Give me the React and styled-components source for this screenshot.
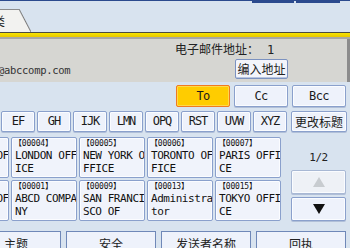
import React from 'react'
import styled, { createGlobalStyle } from 'styled-components'

const GlobalStyle = createGlobalStyle`
	html, body {
		margin: 0;
		padding: 0;
		background: #d8e3ef;
		overflow: hidden;
	}
`

const mono = `"DejaVu Sans Mono", "Liberation Mono", "Noto Sans CJK SC", monospace`
const cjk = `"Noto Sans CJK SC", "DejaVu Sans", sans-serif`

const letters = ['EF', 'GH', 'IJK', 'LMN', 'OPQ', 'RST', 'UVW', 'XYZ']

const entries = [
	{ id: '00003', name: 'CHICAGO OFFICE' },
	{ id: '00004', name: 'LONDON OFFICE' },
	{ id: '00005', name: 'NEW YORK OFFICE' },
	{ id: '00006', name: 'TORONTO OFFICE' },
	{ id: '00007', name: 'PARIS OFFICE' },
	{ id: '00002', name: 'SEATTLE OFFICE' },
	{ id: '00001', name: 'ABCD COMPANY' },
	{ id: '00009', name: 'SAN FRANCISCO OF' },
	{ id: '00013', name: 'Administrator' },
	{ id: '00015', name: 'TOKYO OFFICE' },
]

const bottomTabs = ['主题', '安全', '发送者名称', '回执']

export default function App() {
	return (
		<Screen>
			<GlobalStyle />
			<TopBar>
				<FolderTab>类</FolderTab>
				<TopEdges>
					<TopEdge $w={42} />
					<TopEdge $w={44} />
				</TopEdges>
			</TopBar>
			<YellowRule />
			<InfoPanel>
				<CountLine>
					电子邮件地址：<Count>1</Count>
				</CountLine>
				<EmailLine>
					<Email>@abccomp.com</Email>
					<KeyButton>编入地址</KeyButton>
				</EmailLine>
			</InfoPanel>
			<RecipientRow>
				<FieldButton $active>To</FieldButton>
				<FieldButton>Cc</FieldButton>
				<FieldButton>Bcc</FieldButton>
			</RecipientRow>
			<IndexRow>
				{letters.map((l) => (
					<IndexButton key={l}>{l}</IndexButton>
				))}
				<TitleButton>更改标题</TitleButton>
			</IndexRow>
			<Body>
				<CardGrid>
					{entries.map((e) => (
						<Card key={e.id}>
							<CardId>【{e.id}】</CardId>
							<CardName>{e.name}</CardName>
						</Card>
					))}
				</CardGrid>
				<Pager>
					<PageNum>1/2</PageNum>
					<PageButton $disabled>
						<Arrow $up $disabled />
					</PageButton>
					<PageButton>
						<Arrow />
					</PageButton>
				</Pager>
			</Body>
			<BottomTabs>
				{bottomTabs.map((t) => (
					<BottomTab key={t}>{t}</BottomTab>
				))}
			</BottomTabs>
		</Screen>
	)
}

const Screen = styled.div`
	width: 350px;
	height: 248px;
	overflow: hidden;
	background: #d8e3ef;
	display: flex;
	flex-direction: column;
	position: relative;
	& > * {
		flex-shrink: 0;
	}
`

const TopBar = styled.div`
	height: 31px;
	border-top: 1px solid #2b4a8e;
	display: flex;
	justify-content: space-between;
	align-items: flex-end;
	position: relative;
`

const FolderTab = styled.div`
	position: relative;
	width: 19px;
	height: 22px;
	font: 12px ${cjk};
	line-height: 22px;
	text-indent: -7px;
	color: #222;
	background: #f2f2f0;
	border-top: 1px solid #8c8c8c;
	&::after {
		content: '';
		position: absolute;
		top: -1px;
		right: -12px;
		width: 12px;
		height: 23px;
		background: linear-gradient(
			to top right,
			#f2f2f0 0,
			#f2f2f0 calc(50% - 1px),
			#7c7c7c 50%,
			transparent calc(50% + 1px)
		);
	}
`

const TopEdges = styled.div`
	position: absolute;
	top: 0;
	right: 10px;
	display: flex;
	gap: 2px;
`

const TopEdge = styled.div`
	width: ${(p) => p.$w}px;
	height: 2px;
	background: #2b4a8e;
`

const YellowRule = styled.div`
	height: 4px;
	border-top: 1px solid #4a4a40;
	border-bottom: 2px solid #a8a8a4;
	background: linear-gradient(#f8e400, #e8c800);
`

const InfoPanel = styled.div`
	height: 43px;
	background: #d6d6d2;
	border-right: 3px solid #8c8c8c;
	box-sizing: border-box;
	display: flex;
	flex-direction: column;
`

const CountLine = styled.div`
	height: 20px;
	padding-left: 175px;
	padding-top: 3px;
	box-sizing: border-box;
	font: 12px ${cjk};
	color: #222;
	line-height: 14px;
`

const Count = styled.span`
	margin-left: 8px;
	font-family: ${mono};
	font-size: 12px;
`

const EmailLine = styled.div`
	display: flex;
	align-items: flex-start;
	justify-content: space-between;
	padding-right: 59px;
`

const Email = styled.div`
	font: 10.5px ${mono};
	letter-spacing: -0.3px;
	color: #333;
	margin-left: -2px;
	margin-top: 5px;
`

const KeyButton = styled.div`
	width: 53px;
	height: 20px;
	box-sizing: border-box;
	border: 1px solid #7c92c0;
	border-radius: 2px;
	background: #f3f5fb;
	box-shadow: inset 0 -1px 0 #b8c6e0;
	font: 12px ${cjk};
	line-height: 18px;
	text-align: center;
	color: #222;
`

const RecipientRow = styled.div`
	display: flex;
	gap: 4px;
	padding-left: 176px;
	margin-top: 3px;
`

const buttonFace = `
	box-sizing: border-box;
	border: 1px solid #8aa0cc;
	border-radius: 2px;
	background: #eef2fb;
	box-shadow: inset 0 0 0 1px #fafcff, 0 1px 0 #b0bfd8;
	color: #1a1a1a;
	text-align: center;
`

const FieldButton = styled.div`
	${buttonFace}
	width: 54px;
	height: 22px;
	font: 12px ${mono};
	letter-spacing: -0.6px;
	line-height: 20px;
	${(p) =>
		p.$active &&
		`
		background: #ffcc00;
		border-color: #f07a20;
		box-shadow: inset 0 0 0 1px #ffd84a;
	`}
`

const IndexRow = styled.div`
	display: flex;
	gap: 2px;
	padding-left: 1px;
	margin-top: 4px;
`

const IndexButton = styled.div`
	${buttonFace}
	width: 34px;
	height: 21px;
	font: 12px ${mono};
	letter-spacing: -1px;
	line-height: 19px;
`

const TitleButton = styled.div`
	${buttonFace}
	width: 56px;
	height: 21px;
	margin-left: 2px;
	font: 12px ${cjk};
	line-height: 19px;
`

const Body = styled.div`
	display: flex;
	height: 84px;
	margin-top: 5px;
`

const CardGrid = styled.div`
	display: grid;
	grid-template-columns: repeat(5, 66px);
	grid-auto-rows: 41px;
	gap: 2px;
	margin-left: -57px;
`

const Card = styled.div`
	box-sizing: border-box;
	border: 1px solid #8aa0cc;
	border-radius: 2px;
	background: #f0f3fb;
	box-shadow: inset 0 0 0 1px #fbfcff;
	padding: 1px 0 0 3px;
	overflow: hidden;
	color: #111;
`

const CardId = styled.div`
	font: 8px ${mono};
	line-height: 10px;
	letter-spacing: -0.2px;
	margin-left: -1px;
`

const CardName = styled.div`
	font: 11px ${mono};
	letter-spacing: -0.45px;
	line-height: 13px;
	word-break: break-all;
	width: 64px;
`

const Pager = styled.div`
	margin-left: 10px;
	width: 55px;
	display: flex;
	flex-direction: column;
	gap: 3px;
`

const PageNum = styled.div`
	height: 30px;
	font: 11px ${mono};
	letter-spacing: -0.5px;
	line-height: 42px;
	text-align: center;
	color: #222;
`

const PageButton = styled.div`
	${buttonFace}
	height: 24px;
	display: flex;
	align-items: center;
	justify-content: center;
	${(p) => p.$disabled && `background: #eef1f6; border-color: #a8b8d4;`}
`

const Arrow = styled.div`
	width: 0;
	height: 0;
	border-left: 6px solid transparent;
	border-right: 6px solid transparent;
	${(p) =>
		p.$up
			? `border-bottom: 10px solid ${p.$disabled ? '#c8ccd0' : '#111'};`
			: `border-top: 10px solid #111;`}
`

const BottomTabs = styled.div`
	display: flex;
	gap: 5px;
	margin-top: 10px;
	margin-left: -29px;
`

const BottomTab = styled.div`
	width: 90px;
	height: 20px;
	box-sizing: border-box;
	border: 1px solid #6f88b8;
	border-bottom: none;
	background: #eef2fb;
	font: 12px ${cjk};
	line-height: 24px;
	text-align: center;
	color: #222;
	overflow: hidden;
`
